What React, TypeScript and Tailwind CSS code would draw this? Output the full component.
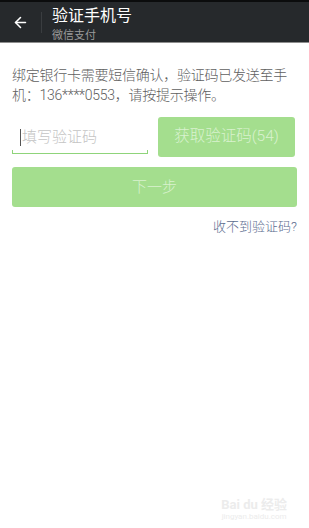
import { ArrowLeft } from "lucide-react"

const font = "font-['Roboto','Noto_Sans_CJK_SC',sans-serif]"

const App = () => {
  return (
    <div className={`w-[309px] h-[528px] bg-white flex flex-col ${font}`}>
      {/* top bar */}
      <div className="h-[43px] bg-[#26292c] border-t-[2px] border-t-[#0b0c0d] border-b border-b-[#8e8e8e] flex items-center shrink-0">
        <div className="w-[41px] flex items-center justify-center">
          <ArrowLeft className="w-[17px] h-[17px] text-white" strokeWidth={2.2} />
        </div>
        <div className="w-px h-[21px] bg-[#3a3d40]" />
        <div className="ml-[10px] self-start pt-[4px] flex flex-col">
          <span className="text-[16px] leading-[20px] text-white">验证手机号</span>
          <span className="mt-[3px] text-[11px] leading-[14px] text-[#9b9b9b]">微信支付</span>
        </div>
      </div>

      <div className="px-[12px]">
        <p className="mt-[22px] text-[14px] leading-[20px] tracking-[-0.25px] text-[#606060] font-light">
          绑定银行卡需要短信确认，验证码已发送至手机：136****0553，请按提示操作。
        </p>

        <div className="mt-[12px] flex gap-[10px]">
          <div className="relative w-[136px] h-[40px] flex items-center">
            <span className="w-px h-[17px] bg-[#555] ml-[8px]" />
            <span className="ml-px text-[15px] text-[#c4c4c4] font-light">填写验证码</span>
            <div className="absolute left-0 right-0 bottom-[3px] h-px bg-[#8fd47a]" />
            <div className="absolute left-0 bottom-[3px] w-px h-[4px] bg-[#8fd47a]" />
            <div className="absolute right-0 bottom-[3px] w-px h-[4px] bg-[#8fd47a]" />
          </div>
          <button className="w-[137px] h-[40px] rounded-[3px] bg-[#a4de8e] text-[15.5px] text-[#d9f2cf] font-light">
            获取验证码(54)
          </button>
        </div>

        <button className="mt-[10px] w-full h-[40px] rounded-[3px] bg-[#a4de8e] text-[15px] text-[#d9f2cf] font-light">
          下一步
        </button>

        <div className="mt-[10px] text-right text-[13px] text-[#5b6c8f] font-light">收不到验证码?</div>
      </div>

      <div className="mt-auto mb-[6px] mr-[22px] self-end flex flex-col items-center text-[#ececec]">
        <span className="text-[13px] leading-[14px] font-bold">Bai du 经验</span>
        <span className="text-[8px] leading-[10px]">jingyan.baidu.com</span>
      </div>
    </div>
  )
}

export default App
